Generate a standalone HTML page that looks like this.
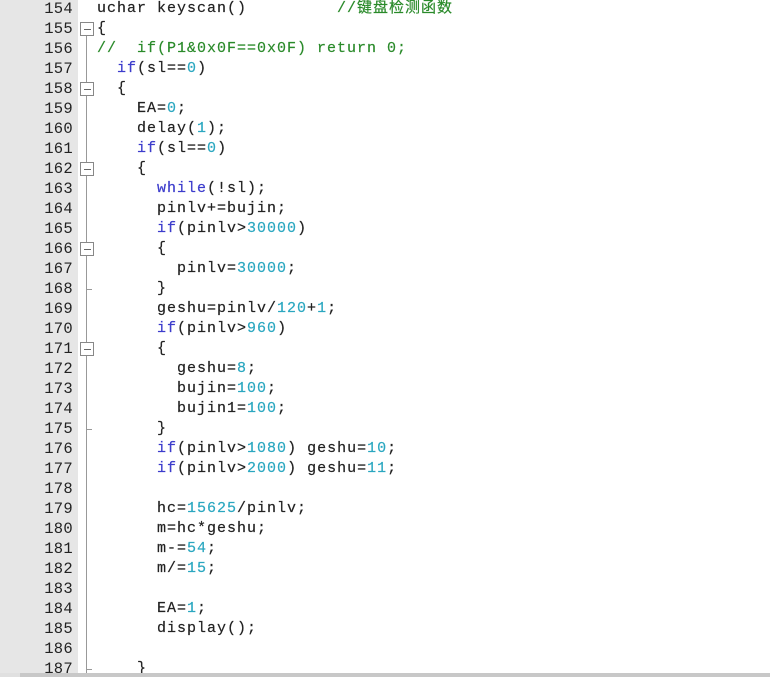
<!DOCTYPE html>
<html><head><meta charset="utf-8"><style>
body{margin:0;width:770px;height:677px;overflow:hidden;background:#fff;position:relative;font-family:"Liberation Mono","Noto Sans CJK SC",monospace;}
#w{position:absolute;left:0;top:1px;width:770px;height:677px}
#g{position:absolute;left:0;top:0;width:78px;height:677px;background:#e6e6e6;}
.n{position:absolute;left:0;width:73px;text-align:right;font-size:15.5px;color:#222;height:20px;line-height:20px;letter-spacing:0.3px}
.c{position:absolute;left:97px;font-size:15px;letter-spacing:1px;color:#222;white-space:pre;height:20px;line-height:20px;-webkit-text-stroke:0.2px}
.k{color:#3c3ccc}.d{color:#2aa7c0}.m{color:#2a8a2a}
.fb{position:absolute;left:80px;width:12px;height:12px;border:1px solid #888;background:#fff;box-sizing:content-box}
.fb:after{content:"";position:absolute;left:3px;top:6px;width:7px;height:1px;background:#666}
.fe{position:absolute;left:86px;width:6px;height:1px;background:#999}
#vl{position:absolute;left:86px;top:28px;width:1px;height:645px;background:#999}
#sb{position:absolute;left:0;top:673px;width:770px;height:4px;background:#e0e0e0}
#sb2{position:absolute;left:20px;top:673px;width:750px;height:4px;background:#c8c8c8}
</style></head><body>
<div id="g"></div>
<div id="w">
<div id="vl"></div>
<div class="n" style="top:-2px">154</div><div class="c" style="top:-2px">uchar keyscan()         <span class="m">//键盘检测函数</span></div>
<div class="n" style="top:18px">155</div><div class="c" style="top:18px">{</div>
<div class="n" style="top:38px">156</div><div class="c" style="top:38px"><span class="m">//  if(P1&amp;0x0F==0x0F) return 0;</span></div>
<div class="n" style="top:58px">157</div><div class="c" style="top:58px">  <span class="k">if</span>(sl==<span class="d">0</span>)</div>
<div class="n" style="top:78px">158</div><div class="c" style="top:78px">  {</div>
<div class="n" style="top:98px">159</div><div class="c" style="top:98px">    EA=<span class="d">0</span>;</div>
<div class="n" style="top:118px">160</div><div class="c" style="top:118px">    delay(<span class="d">1</span>);</div>
<div class="n" style="top:138px">161</div><div class="c" style="top:138px">    <span class="k">if</span>(sl==<span class="d">0</span>)</div>
<div class="n" style="top:158px">162</div><div class="c" style="top:158px">    {</div>
<div class="n" style="top:178px">163</div><div class="c" style="top:178px">      <span class="k">while</span>(!sl);</div>
<div class="n" style="top:198px">164</div><div class="c" style="top:198px">      pinlv+=bujin;</div>
<div class="n" style="top:218px">165</div><div class="c" style="top:218px">      <span class="k">if</span>(pinlv&gt;<span class="d">30000</span>)</div>
<div class="n" style="top:238px">166</div><div class="c" style="top:238px">      {</div>
<div class="n" style="top:258px">167</div><div class="c" style="top:258px">        pinlv=<span class="d">30000</span>;</div>
<div class="n" style="top:278px">168</div><div class="c" style="top:278px">      }</div>
<div class="n" style="top:298px">169</div><div class="c" style="top:298px">      geshu=pinlv/<span class="d">120</span>+<span class="d">1</span>;</div>
<div class="n" style="top:318px">170</div><div class="c" style="top:318px">      <span class="k">if</span>(pinlv&gt;<span class="d">960</span>)</div>
<div class="n" style="top:338px">171</div><div class="c" style="top:338px">      {</div>
<div class="n" style="top:358px">172</div><div class="c" style="top:358px">        geshu=<span class="d">8</span>;</div>
<div class="n" style="top:378px">173</div><div class="c" style="top:378px">        bujin=<span class="d">100</span>;</div>
<div class="n" style="top:398px">174</div><div class="c" style="top:398px">        bujin1=<span class="d">100</span>;</div>
<div class="n" style="top:418px">175</div><div class="c" style="top:418px">      }</div>
<div class="n" style="top:438px">176</div><div class="c" style="top:438px">      <span class="k">if</span>(pinlv&gt;<span class="d">1080</span>) geshu=<span class="d">10</span>;</div>
<div class="n" style="top:458px">177</div><div class="c" style="top:458px">      <span class="k">if</span>(pinlv&gt;<span class="d">2000</span>) geshu=<span class="d">11</span>;</div>
<div class="n" style="top:478px">178</div>
<div class="n" style="top:498px">179</div><div class="c" style="top:498px">      hc=<span class="d">15625</span>/pinlv;</div>
<div class="n" style="top:518px">180</div><div class="c" style="top:518px">      m=hc*geshu;</div>
<div class="n" style="top:538px">181</div><div class="c" style="top:538px">      m-=<span class="d">54</span>;</div>
<div class="n" style="top:558px">182</div><div class="c" style="top:558px">      m/=<span class="d">15</span>;</div>
<div class="n" style="top:578px">183</div>
<div class="n" style="top:598px">184</div><div class="c" style="top:598px">      EA=<span class="d">1</span>;</div>
<div class="n" style="top:618px">185</div><div class="c" style="top:618px">      display();</div>
<div class="n" style="top:638px">186</div>
<div class="n" style="top:658px">187</div><div class="c" style="top:658px">    }</div>
<div class="fb" style="top:21px"></div>
<div class="fb" style="top:81px"></div>
<div class="fb" style="top:161px"></div>
<div class="fb" style="top:241px"></div>
<div class="fb" style="top:341px"></div>
<div class="fe" style="top:288px"></div>
<div class="fe" style="top:428px"></div>
<div class="fe" style="top:668px"></div>
</div>
<div id="sb"></div><div id="sb2"></div>
</body></html>
